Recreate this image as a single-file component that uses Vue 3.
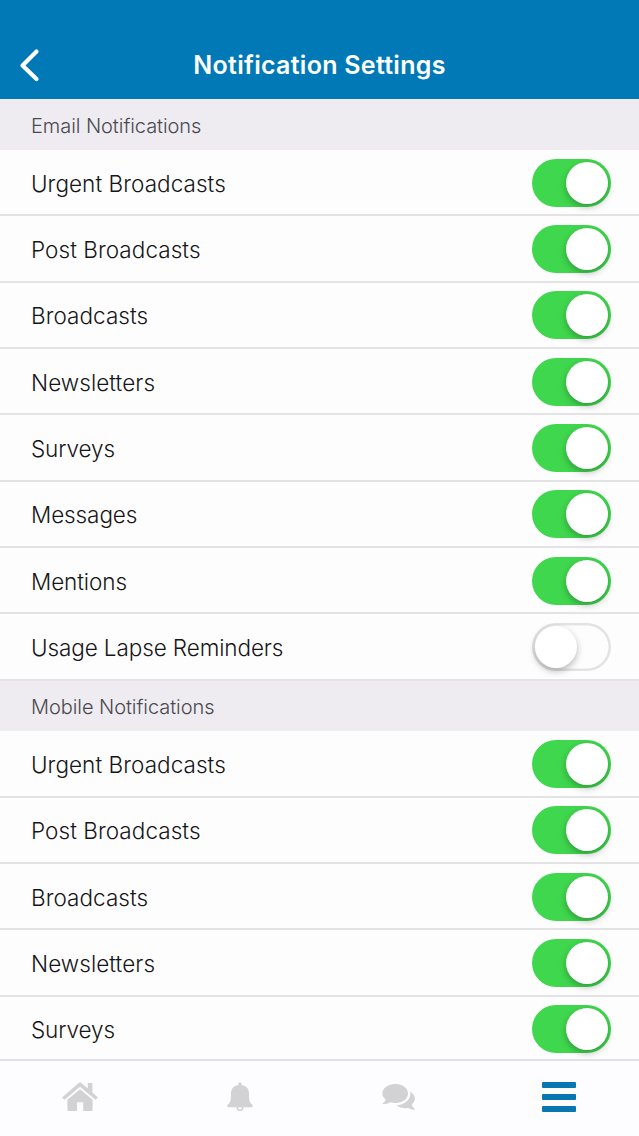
<script setup>
import { reactive } from 'vue'

const sections = reactive([
  {
    title: 'Email Notifications',
    cls: 'email',
    items: [
      { label: 'Urgent Broadcasts', on: true },
      { label: 'Post Broadcasts', on: true },
      { label: 'Broadcasts', on: true },
      { label: 'Newsletters', on: true },
      { label: 'Surveys', on: true, tight: true },
      { label: 'Messages', on: true, tight: true },
      { label: 'Mentions', on: true, tight: true },
      { label: 'Usage Lapse Reminders', on: false, tight: true }
    ]
  },
  {
    title: 'Mobile Notifications',
    cls: 'mobile',
    items: [
      { label: 'Urgent Broadcasts', on: true },
      { label: 'Post Broadcasts', on: true },
      { label: 'Broadcasts', on: true },
      { label: 'Newsletters', on: true },
      { label: 'Surveys', on: true, tight: true }
    ]
  }
])
</script>

<template>
  <div class="screen">
    <header class="navbar">
      <button class="back" aria-label="Back">
        <svg width="24" height="36" viewBox="0 0 24 36">
          <path d="M19.5 4.5 L5.5 18.5 L19.5 32" fill="none" stroke="#fff" stroke-width="4.2" stroke-linecap="round" stroke-linejoin="round" />
        </svg>
      </button>
      <h1>Notification Settings</h1>
    </header>

    <main class="list">
      <section v-for="s in sections" :key="s.title" :class="s.cls">
        <h2><span>{{ s.title }}</span></h2>
        <div v-for="item in s.items" :key="item.label" class="row">
          <span class="label" :class="{ tight: item.tight }">{{ item.label }}</span>
          <button class="switch" :class="{ on: item.on }" role="switch" :aria-checked="item.on" :aria-label="item.label" @click="item.on = !item.on">
            <span class="knob"></span>
          </button>
        </div>
      </section>
    </main>

    <nav class="tabs">
      <a class="tab">
        <svg width="36" height="30" viewBox="0 0 36 30" fill="#d2d1d4">
          <path d="M16.5 1.2 Q18 0 19.5 1.2 L25.8 6.6 V1.6 Q25.8 1 26.4 1 H29.8 Q30.4 1 30.4 1.6 V10.5 L35.4 14.9 Q35.9 15.4 35.4 15.9 L34.2 17.3 Q33.7 17.8 33.2 17.4 L18 4.7 L2.8 17.4 Q2.3 17.8 1.8 17.3 L.6 15.9 Q.1 15.4 .6 14.9 Z" />
          <path d="M18 7.3 L30.6 17.8 V28 Q30.6 29 29.6 29 H21.2 V20.2 H15 V29 H6.4 Q5.4 29 5.4 28 V17.8 Z" />
        </svg>
      </a>
      <a class="tab">
        <svg width="26" height="30" viewBox="0 0 26 30" fill="#d2d1d4">
          <path d="M11.3 3.2 V1.8 Q13 -.7 14.7 1.8 V3.2 C20 3.8 22 7.5 22 11.5 C22 17.5 22.3 20.2 25.1 22.6 Q25.8 23.3 25.5 24.4 Q25.2 25.3 24.2 25.3 H1.8 Q.8 25.3 .5 24.4 Q.2 23.3 .9 22.6 C3.7 20.2 4 17.5 4 11.5 C4 7.5 6 3.8 11.3 3.2 Z" />
          <path d="M10.2 25 C10.2 29.4 15.8 29.4 15.8 25" fill="none" stroke="#d2d1d4" stroke-width="1.5" />
        </svg>
      </a>
      <a class="tab">
        <svg width="34" height="28" viewBox="0 0 34 28" fill="#d2d1d4">
          <path d="M13.4 1 C20.4 1 26 5.1 26 10.5 C26 15.9 20.4 20 13.4 20 Q10.6 20 8.2 19.2 Q5 21.3 .8 21 Q.2 20.8 .8 20.2 Q3.3 18.6 3.7 16.6 Q.4 14 .4 10.5 C.4 5.1 6.4 1 13.4 1 Z" />
          <path d="M28.3 8.5 C33.8 12.5 34.4 17.2 29.8 21.4 Q30.3 24.1 32.7 25.8 Q33.2 26.5 32.4 26.7 Q28.9 26.7 26 24.9 Q19.2 25.9 14.4 22.5 C23.2 21.8 29.5 16.2 28.3 8.5 Z" />
        </svg>
      </a>
      <a class="tab active">
        <svg width="34" height="30" viewBox="0 0 34 30" fill="#0877af">
          <rect x="0" y="0" width="34" height="6" rx="1" />
          <rect x="0" y="12" width="34" height="6" rx="1" />
          <rect x="0" y="24" width="34" height="6" rx="1" />
        </svg>
      </a>
    </nav>
  </div>
</template>

<style>
body { margin: 0; overflow: hidden; }
</style>

<style scoped>
.screen {
  width: 639px;
  height: 1136px;
  display: flex;
  flex-direction: column;
  overflow: hidden;
  background: #fefdfe;
  font-family: Inter, "Liberation Sans", sans-serif;
}
button { padding: 0; border: 0; background: none; }
.navbar {
  box-sizing: border-box;
  flex: none;
  height: 99px;
  padding-top: 31px;
  display: grid;
  grid-template-columns: 80px 1fr 80px;
  align-items: center;
  background: #0079b6;
}
.back { display: flex; margin-left: 17px; width: 24px; }
h1 {
  margin: 0;
  text-align: center;
  white-space: nowrap;
  color: #fff;
  font-size: 25px;
  font-weight: 600;
  letter-spacing: .28px;
  line-height: 30px;
}
.list { flex: 1; min-height: 0; overflow: hidden; }
h2 {
  box-sizing: border-box;
  margin: 0;
  height: 51.1px;
  padding: 2px 31px 0;
  display: flex;
  align-items: center;
  background: #eeecf1;
  color: #4b494f;
  font-size: 20px;
  font-weight: 300;
  letter-spacing: -.06px;
}
.mobile h2 { height: 50.7px; }
.row {
  box-sizing: border-box;
  height: 66.33px;
  padding: 1px 28px 0 31px;
  display: flex;
  align-items: center;
  justify-content: space-between;
  border-bottom: 2px solid #e3e2e5;
}
.label {
  color: #161518;
  font-size: 22.5px;
  font-weight: 300;
  letter-spacing: .06px;
  padding-top: 1px;
}
.label.tight { letter-spacing: -.1px; }
.switch {
  box-sizing: border-box;
  width: 79px;
  height: 48px;
  padding: 3px;
  display: flex;
  border-radius: 24px;
  background: #fefdfe;
  box-shadow: inset 0 0 0 2.5px #e3e2e5;
}
.switch.on { justify-content: flex-end; background: #3fd74d; box-shadow: none; }
.knob {
  width: 42px;
  height: 42px;
  border-radius: 50%;
  background: #fff;
  box-shadow: 0 3px 7px rgba(0, 0, 0, .28);
}
.tabs {
  box-sizing: border-box;
  flex: none;
  height: 77px;
  display: grid;
  grid-template-columns: repeat(4, 1fr);
  border-top: 2px solid #e1e0e3;
  background: #fdfcfe;
}
.tab { display: flex; align-items: center; justify-content: center; padding-bottom: 3px; }
</style>
